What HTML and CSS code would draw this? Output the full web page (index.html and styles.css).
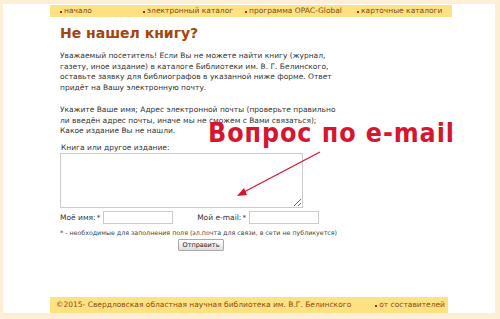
FILE: index.html
```html
<!DOCTYPE html>
<html lang="ru">

<head>
    <meta charset="UTF-8">
    <title>Не нашел книгу?</title>
    <link rel="stylesheet" href="styles.css">
</head>

<body>
    <div class="wrap">
        <div class="page">
            <ul class="nav">
                <li class="nav-1">начало</li>
                <li class="nav-2">электронный каталог</li>
                <li class="nav-3">программа OPAC-Global</li>
                <li class="nav-4">карточные каталоги</li>
            </ul>

            <div class="content">
                <h1>Не нашел книгу?</h1>
                <p>Уважаемый посетитель! Если Вы не можете найти книгу (журнал,<br>
                    газету, иное издание) в каталоге Библиотеки им. В. Г. Белинского,<br>
                    оставьте заявку для библиографов в указанной ниже форме. Ответ<br>
                    придёт на Вашу электронную почту.</p>
                <p>Укажите Ваше имя; Адрес электронной почты (проверьте правильно<br>
                    ли введён адрес почты, иначе мы не сможем с Вами связаться);<br>
                    Какое издание Вы не нашли.</p>

                <form class="ask">
                    <label class="book-label">Книга или другое издание:</label>
                    <textarea class="book"></textarea>
                    <div class="row">
                        <label>Моё имя:<span class="req">*</span></label>
                        <input type="text" class="name">
                        <label class="mail-label">Мой e-mail:<span class="req">*</span></label>
                        <input type="text">
                    </div>
                    <div class="note">* - необходимые для заполнения поля (эл.почта для связи, в сети не публикуется)</div>
                    <div class="send"><button type="button">Отправить</button></div>
                </form>

                <div class="callout">Вопрос по e-mail</div>
                <svg class="arrow" width="90" height="50" viewBox="0 0 90 50">
                    <line x1="86" y1="2" x2="8" y2="43" stroke="#d8152e" stroke-width="1.3" />
                    <polygon points="3,46 10,38 13,45" fill="#d8152e" />
                </svg>
            </div>

            <div class="footer">
                <span>©2015- Свердловская областная научная библиотека им. В.Г. Белинского</span>
                <span class="authors">от составителей</span>
            </div>
        </div>
    </div>
</body>

</html>
```

FILE: styles.css
```css
body {
    margin: 0;
    background-color: #fdeed6;
    font-family: "DejaVu Sans", Verdana, sans-serif;
    color: #222;
}

.wrap {
    background: #fff;
    margin: 4px 5px 0 3px;
    height: 309px;
}

.page {
    width: 402px;
    margin-left: 47px;
    height: 100%;
    display: flex;
    flex-direction: column;
    position: relative;
}

.nav {
    list-style: none;
    margin: 1px 0 0 0;
    padding: 0 0 0 10px;
    height: 12px;
    background: #fde183;
    display: flex;
    font-size: 7.5px;
    line-height: 12px;
    color: #7a4e10;
}

.nav li::before,
.footer .authors::before {
    content: "";
    display: inline-block;
    width: 2px;
    height: 2px;
    background: #c8200a;
    margin-right: 2px;
    vertical-align: 0;
}

.nav-1 { width: 83px; }
.nav-2 { width: 102px; }
.nav-3 { width: 112px; }

.content {
    padding-left: 10px;
    flex: 1;
}

h1 {
    font-size: 14px;
    font-weight: bold;
    color: #a4450e;
    margin: 8px 0 10px 0;
    line-height: 16px;
}

p {
    font-size: 7.5px;
    line-height: 10.7px;
    margin: 0 0 11px 0;
    color: #333;
    white-space: nowrap;
}

p:last-of-type {
    margin-bottom: 6px;
}

.ask {
    margin-top: 0;
    font-size: 7.5px;
    color: #333;
}

.book-label {
    display: block;
    margin-left: 1px;
    line-height: 10px;
}

.book {
    display: block;
    width: 241px;
    height: 53px;
    border: 1px solid #ccc;
    margin: 0;
    padding: 0;
    resize: vertical;
}

.row {
    display: flex;
    align-items: center;
    margin-top: 3px;
}

.row input {
    width: 68px;
    height: 11px;
    border: 1px solid #ccc;
    padding: 0;
    margin-left: 3px;
}

.req {
    font-size: 7px;
    margin-left: 1px;
}

.mail-label {
    margin-left: 24px;
}

.note {
    font-size: 6.3px;
    margin-top: 5px;
    color: #444;
}

.send {
    text-align: center;
    width: 282px;
    margin-top: 3px;
}

.send button {
    font-family: "DejaVu Sans", sans-serif;
    font-size: 6.5px;
    padding: 1px 4px;
    height: 12px;
    border: 1px solid #aaa;
    background: linear-gradient(#fff, #ddd);
    border-radius: 1px;
    color: #222;
}

.callout {
    position: absolute;
    left: 158px;
    top: 118px;
    font-family: "DejaVu Sans", sans-serif;
    font-weight: bold;
    font-size: 26px;
    line-height: 22px;
    letter-spacing: 1px;
    color: #d8152e;
    transform: scaleX(0.92);
    transform-origin: left top;
    white-space: nowrap;
}

.arrow {
    position: absolute;
    left: 184px;
    top: 146px;
}

.footer {
    background: #fde183;
    height: 16px;
    line-height: 16px;
    font-size: 7.5px;
    color: #8c4d0c;
    padding-left: 6px;
    display: flex;
    margin-right: 4px;
}

.footer .authors {
    margin-left: 24px;
}
```
